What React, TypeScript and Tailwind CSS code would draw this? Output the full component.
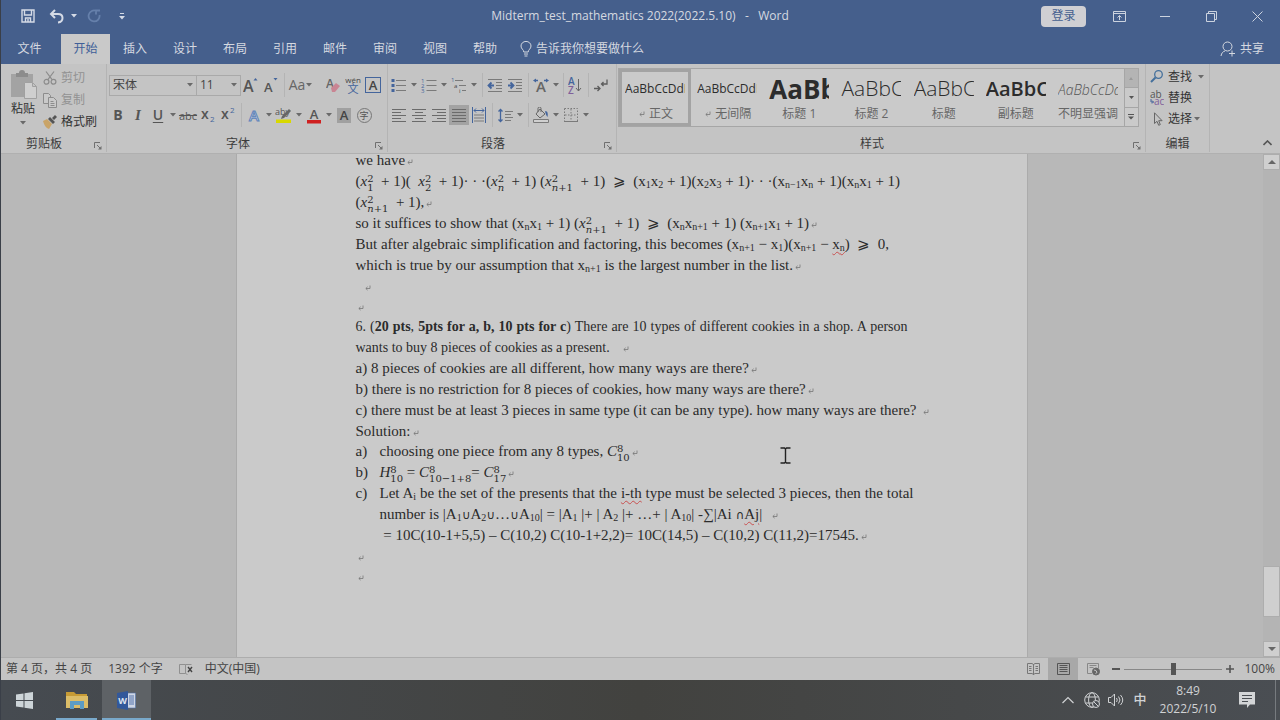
import React from "react";

type Kids = { children?: React.ReactNode };

const Caret = ({ className = "w-2.5" }: { className?: string }) => (
  <span className={`flex shrink-0 items-center justify-center ${className}`}>
    <svg width="6" height="4" viewBox="0 0 6 4"><path d="M0 0h6L3 3.4z" fill="#6a6a6a" /></svg>
  </span>
);

const Sep = ({ className = "w-1.5" }: { className?: string }) => (
  <span className={`flex h-6 shrink-0 justify-center ${className}`}><span className="w-px bg-[#b4b4b4]" /></span>
);

const Tool = ({ label, className = "w-5", children }: Kids & { label: string; className?: string }) => (
  <button type="button" aria-label={label} className={`flex h-5 shrink-0 items-center justify-center leading-none ${className}`}>
    {children}
  </button>
);

const Launcher = () => (
  <svg width="8" height="8" viewBox="0 0 8 8" fill="none" stroke="#6f6f6f"><path d="M.5 6V.5H6M3 3l3 3" /><path d="M7.5 4v3.5H4z" fill="#6f6f6f" stroke="none" /></svg>
);

const Group = ({ name, className = "", launcher = true, children }: Kids & { name: string; className?: string; launcher?: boolean }) => (
  <section aria-label={name} className={`flex shrink-0 flex-col border-r border-[#b4b4b4] ${className}`}>
    <div className="h-[72px]">{children}</div>
    <div className={`relative flex h-4 items-center justify-center text-[12px] text-[#3c3c3c] ${launcher ? "pr-[18px]" : ""}`}>
      {name}
      {launcher && <button type="button" aria-label={`${name}设置`} className="absolute right-1 bottom-0.5"><Launcher /></button>}
    </div>
  </section>
);

const Lines = ({ rows }: { rows: [number, number][] }) => (
  <svg width="14" height="15" viewBox="0 0 14 15" stroke="#6b6b6b">
    {rows.map(([a, b], i) => <path key={i} d={`M${a} ${i * 3 + 1.5}H${b}`} />)}
  </svg>
);

const styles: { name: string; sample: string; look: string; mark?: boolean; on?: boolean }[] = [
  { name: "正文", sample: "AaBbCcDdI", look: "text-[12px]", mark: true, on: true },
  { name: "无间隔", sample: "AaBbCcDdI", look: "text-[12px]", mark: true },
  { name: "标题 1", sample: "AaBb", look: "text-[26px] font-bold" },
  { name: "标题 2", sample: "AaBbC", look: "text-[21px] font-light" },
  { name: "标题", sample: "AaBbC", look: "text-[21px] font-light" },
  { name: "副标题", sample: "AaBbC", look: "text-[20px] font-semibold" },
  { name: "不明显强调", sample: "AaBbCcDd", look: "text-[14px] font-light italic text-[#555]" },
];

const Mark = ({ className = "ml-0.5" }: { className?: string }) => (
  <svg className={`inline-block ${className}`} width="6" height="6" viewBox="0 0 6 6" fill="none" stroke="#777" strokeWidth=".8"><path d="M5 .5v3H1M2.6 1.8L.8 3.5l1.8 1.6" /></svg>
);

const Sub = ({ children }: Kids) => <sub className="top-0.5 text-[10px]">{children}</sub>;

const Stack = ({ v, top, low }: { v: string; top: string; low: string }) => (
  <span className="whitespace-nowrap">
    <i>{v}</i>
    <span className="inline-flex flex-col align-middle font-['DejaVu_Serif',serif] text-[10px] leading-[9px]">
      <span>{top}</span>
      <span>{low.startsWith("n") ? <><i>n</i>{low.slice(1)}</> : low}</span>
    </span>
  </span>
);

const Op = ({ children }: Kids) => <span className="font-['DejaVu_Sans',sans-serif] text-[12px] leading-none">{children}</span>;

const Geq = () => <span className="font-['DejaVu_Sans',sans-serif] text-[15px] leading-none font-light">⩾</span>;

const Typo = ({ children }: Kids) => <span className="underline decoration-[#c8504f] decoration-wavy decoration-1 underline-offset-2">{children}</span>;

const Line = ({ children }: Kids) => <p className="h-[21px] whitespace-pre">{children}</p>;
const Blank = ({ className = "" }: { className?: string }) => <p className={`h-5 ${className}`}><Mark /></p>;

function TitleBar() {
  return (
    <div className="grid h-8 grid-cols-[1fr_auto_1fr] items-center">
      <div className="flex items-center pl-[21px]">
        <button type="button" aria-label="保存"><svg width="14" height="14" viewBox="0 0 14 14" fill="none" stroke="#d5dbe6" strokeWidth="1.4"><path d="M1 1h12v12H1z" /><path d="M3.5 1v5h7V1M4.5 13V9h5v4M7 10v3" /></svg></button>
        <button type="button" aria-label="撤消" className="ml-3.5"><svg width="16" height="15" viewBox="0 0 16 15" fill="none" stroke="#d5dbe6" strokeWidth="2"><path d="M6 1L2 5l4 4M2.5 5H9c6 0 6 8 0 8.500" /></svg></button>
        <button type="button" aria-label="撤消列表" className="ml-1.5"><svg width="6" height="4" viewBox="0 0 6 4"><path d="M0 0h6L3 3.4z" fill="#d5dbe6" /></svg></button>
        <button type="button" aria-label="重复" className="ml-2.5"><svg width="14" height="14" viewBox="0 0 14 14" fill="none" stroke="#6680ab" strokeWidth="1.8"><path d="M9.500 2A5.500 5.500 0 1 0 12.500 6M9 5.500V1.500h4" /></svg></button>
        <button type="button" aria-label="自定义快速访问工具栏" className="ml-[18px]"><svg width="6" height="7" viewBox="0 0 6 7"><path d="M1 .5h4" stroke="#d5dbe6" /><path d="M0 3h6L3 6.400z" fill="#d5dbe6" /></svg></button>
      </div>
      <h1 className="whitespace-pre text-[12px] text-[#d5d9e0]">Midterm_test_mathematics 2022(2022.5.10)   -   Word</h1>
      <div className="flex items-center justify-end">
        <button type="button" className="mr-2.5 h-[21px] w-[45px] rounded-sm bg-[#cfcfd3] text-[12px] leading-none text-[#45608f]">登录</button>
        <button type="button" aria-label="功能区显示选项" className="flex w-[46px] justify-center"><svg width="13" height="11" viewBox="0 0 13 11" fill="none" stroke="#ccd3df"><path d="M.5.5h12v10H.5zM.5 2.500h12M6.500 9V4.500M4.500 6.500l2-2 2 2" /></svg></button>
        <button type="button" aria-label="最小化" className="flex w-[46px] justify-center"><svg width="10" height="10" viewBox="0 0 10 10" stroke="#ccd3df"><path d="M0 5.500h10" /></svg></button>
        <button type="button" aria-label="还原" className="flex w-[46px] justify-center"><svg width="11" height="11" viewBox="0 0 11 11" fill="none" stroke="#ccd3df"><path d="M.5 2.500h8v8h-8zM2.500 2.500v-2h8v8h-2" /></svg></button>
        <button type="button" aria-label="关闭" className="flex w-[46px] justify-center"><svg width="11" height="11" viewBox="0 0 11 11" stroke="#ccd3df"><path d="M.5.5l10 10M10.500.5l-10 10" /></svg></button>
      </div>
    </div>
  );
}

function Tabs() {
  return (
    <nav className="flex h-8 items-end pl-1 text-[12px] text-[#d5d9e0]">
      <button type="button" className="mr-1.5 h-[30px] w-[51px]">文件</button>
      <button type="button" aria-current="page" className="h-[30px] w-[49px] bg-[#c9c9c9] text-[#3f5f98]">开始</button>
      {["插入", "设计", "布局", "引用", "邮件", "审阅", "视图", "帮助"].map((t) => (
        <button key={t} type="button" className="h-[30px] w-[50px]">{t}</button>
      ))}
      <button type="button" className="ml-2.5 flex h-[30px] items-center gap-1">
        <svg width="12" height="16" viewBox="0 0 12 16" fill="none" stroke="#d5d9e0"><path d="M3.800 11C3.800 8.600 1 8 1 5a5 4.600 0 0 1 10 0c0 3-2.800 3.600-2.800 6zM4 13h4M4.500 15h3" /></svg>
        告诉我你想要做什么
      </button>
      <button type="button" className="mr-4 ml-auto flex h-[30px] items-center gap-1">
        <svg width="16" height="16" viewBox="0 0 16 16" fill="none" stroke="#d5d9e0"><circle cx="7.500" cy="5.500" r="4.500" /><path d="M1 15c.5-3 2-4.500 4-5M12 9.500v6M9 12.500h6" /></svg>
        共享
      </button>
    </nav>
  );
}

function Clipboard() {
  return (
    <Group name="剪贴板" className="w-[107px]">
      <div className="flex gap-1.5 pl-[9px]">
        <button type="button" className="flex w-7 flex-col items-center pt-1.5 text-[12px] leading-4 text-[#333]">
          <svg width="28" height="31" viewBox="0 0 28 31"><path d="M2 4h22v8h-8v15H2z" fill="#a3a3a3" /><path d="M7 3h3a3 3 0 0 1 6 0h3v4H7z" fill="#8c8c8c" /><path d="M15.500 12.500h8l4 4v12h-12zM23.500 12.500v4h4" fill="#cfcfcf" stroke="#a0a0a0" /></svg>
          <span className="whitespace-nowrap">粘贴</span>
          <Caret className="h-3" />
        </button>
        <div className="flex flex-col pt-[3px] text-[12px] text-[#929292]">
          <button type="button" className="flex h-[22px] items-center gap-1">
            <svg width="14" height="14" viewBox="0 0 14 14" fill="none" stroke="#8c8c8c" strokeWidth="1.2"><circle cx="3.500" cy="10.800" r="2.400" /><circle cx="10.500" cy="10.800" r="2.400" /><path d="M3 .5l6.300 8.300M11 .5L4.700 8.800" /></svg>剪切
          </button>
          <button type="button" className="flex h-[22px] items-center gap-1">
            <svg width="14" height="15" viewBox="0 0 14 15" fill="#c9c9c9" stroke="#8c8c8c"><path d="M.5.5h5l2 2v8h-7z" /><path d="M5.500 4.500h5l3 3v7h-8zM7.500 8.500h3M7.500 10.500h4M7.500 12.500h4" /></svg>复制
          </button>
          <button type="button" className="flex h-[22px] items-center gap-1 text-[#333]">
            <svg width="14" height="14" viewBox="0 0 14 14"><path d="M0 6l4-2 5 5-3 5c-3-1-5-4-6-8z" fill="#c9a468" /><path d="M5 4l2-2 5 5-2 2zM9 3l3-3 2 2-3 3z" fill="#555" /></svg>格式刷
          </button>
        </div>
      </div>
    </Group>
  );
}

function FontGroup() {
  return (
    <Group name="字体" className="w-[281px]">
      <div className="flex h-[30px] items-center pt-3 pl-0.5">
        <label className="relative flex">
          <select aria-label="字体" className="h-[21px] w-[88px] appearance-none border border-[#a9a9a9] pl-[3px] text-[12px] leading-none text-[#444]"><option>宋体</option></select>
          <span className="pointer-events-none absolute top-2 right-0.5"><Caret /></span>
        </label>
        <label className="relative -ml-px flex">
          <select aria-label="字号" className="h-[21px] w-[45px] appearance-none border border-[#a9a9a9] pl-[3px] text-[12px] leading-none text-[#444]"><option>11</option></select>
          <span className="pointer-events-none absolute top-2 right-0.5"><Caret /></span>
        </label>
        <Tool label="增大字号"><svg width="16" height="16" viewBox="0 0 16 16"><text x="0" y="15" fontSize="16" fontWeight="600" fill="#555">A</text><path d="M10.500 3.500L12.500 1l2 2.500z" fill="#44659c" /></svg></Tool>
        <Tool label="减小字号"><svg width="16" height="16" viewBox="0 0 16 16"><text x="1" y="15" fontSize="13" fontWeight="600" fill="#555">A</text><path d="M10.500 1h4l-2 2.500z" fill="#44659c" /></svg></Tool>
        <Sep />
        <Tool label="更改大小写" className="mr-2 w-7"><span className="text-[14px] text-[#666]">Aa</span><Caret className="w-2" /></Tool>
        <Tool label="清除格式"><svg width="15" height="15" viewBox="0 0 15 15"><text x="0" y="10" fontSize="12" fontWeight="600" fill="#666">A</text><path d="M5 10l5-5 4 3-5 6H6z" fill="#c98593" /></svg></Tool>
        <Tool label="拼音指南"><svg width="16" height="18" viewBox="0 0 16 18"><text x="8" y="6.500" fontSize="8" textAnchor="middle" fill="#444">wén</text><text x="8" y="16.500" fontSize="11" textAnchor="middle" fill="#44659c">文</text></svg></Tool>
        <Tool label="字符边框"><span className="flex size-4 items-center justify-center border border-[#44659c] text-[13px] leading-none font-semibold text-[#444]">A</span></Tool>
      </div>
      <div className="flex h-[42px] items-center pl-px text-[14px] text-[#555]">
        <Tool label="加粗"><b>B</b></Tool>
        <Tool label="倾斜"><i className="font-['Liberation_Serif',serif] text-[15px] font-bold">I</i></Tool>
        <Tool label="下划线"><span className="font-semibold underline underline-offset-2">U</span></Tool>
        <Caret />
        <Tool label="删除线"><s className="text-[11px]">abc</s></Tool>
        <Tool label="下标"><svg width="14" height="16" viewBox="0 0 14 16"><text x="0" y="12" fontSize="14" fontWeight="600" fill="#555">x</text><text x="9" y="15" fontSize="8" fill="#44659c">2</text></svg></Tool>
        <Tool label="上标"><svg width="14" height="16" viewBox="0 0 14 16"><text x="0" y="12" fontSize="14" fontWeight="600" fill="#555">x</text><text x="9" y="6" fontSize="8" fill="#44659c">2</text></svg></Tool>
        <Sep />
        <Tool label="文本效果"><svg width="14" height="15" viewBox="0 0 14 15"><text x="7" y="13" fontSize="15" fontWeight="600" textAnchor="middle" fill="#c9d3e0" stroke="#5d83ba">A</text></svg></Tool>
        <Caret />
        <Tool label="突出显示"><svg width="18" height="17" viewBox="0 0 18 17"><text x="0" y="8" fontSize="9" fill="#555">aby</text><path d="M6 12l1-3 7-7 2 2-7 7z" fill="#666" /><rect x="1" y="12.500" width="15" height="3.500" fill="#d8d800" /></svg></Tool>
        <Caret />
        <Tool label="字体颜色"><svg width="16" height="17" viewBox="0 0 16 17"><text x="8" y="11.500" fontSize="13" fontWeight="600" textAnchor="middle" fill="#555">A</text><rect x="1" y="13" width="14" height="3.500" fill="#cf2020" /></svg></Tool>
        <Caret />
        <Tool label="字符底纹"><span className="flex h-[15px] w-3.5 items-center justify-center bg-[#a0a0a0] text-[13px] leading-none font-semibold text-[#444]">A</span></Tool>
        <Tool label="带圈字符"><span className="flex size-[15px] items-center justify-center rounded-full border border-[#777] text-[9px] leading-none">字</span></Tool>
      </div>
    </Group>
  );
}

function ParagraphGroup() {
  return (
    <Group name="段落" className="w-[229px]">
      <div className="flex h-[30px] items-center pt-3 pl-px">
        <Tool label="项目符号"><svg width="16" height="15" viewBox="0 0 16 15"><path d="M5 2.500h10M5 7.500h10M5 12.500h10" stroke="#7a7a7a" /><path d="M.5 1h3v3h-3zM.5 6h3v3h-3zM.5 11h3v3h-3z" fill="#44659c" /></svg></Tool><Caret />
        <Tool label="编号"><svg width="16" height="15" viewBox="0 0 16 15"><path d="M5.500 2.500h10M5.500 7.500h10M5.500 12.500h10" stroke="#7a7a7a" /><g fontSize="6" fill="#44659c"><text x="0" y="4.500">1</text><text x="0" y="9.800">2</text><text x="0" y="15">3</text></g></svg></Tool><Caret />
        <Tool label="多级列表"><svg width="16" height="15" viewBox="0 0 16 15"><path d="M4 2.500h8M8 7.500h7M11 12.500h4" stroke="#7a7a7a" /><g fontSize="6" fill="#444"><text x="0" y="4" fill="#44659c">1</text><text x="3" y="10">a</text><text x="8" y="14.500">i</text></g></svg></Tool><Caret />
        <Sep />
        <Tool label="减少缩进量"><svg width="16" height="13" viewBox="0 0 16 13"><path d="M1 .5h14M9 3.500h6M9 6.500h6M9 9.500h6M1 12.500h14" stroke="#7a7a7a" /><path d="M7 6.500H2M4.500 3.500l-3 3 3 3" fill="none" stroke="#44659c" strokeWidth="1.800" /></svg></Tool>
        <Tool label="增加缩进量"><svg width="16" height="13" viewBox="0 0 16 13"><path d="M1 .5h14M9 3.500h6M9 6.500h6M9 9.500h6M1 12.500h14" stroke="#7a7a7a" /><path d="M1 6.500h5M3.500 3.500l3 3-3 3" fill="none" stroke="#44659c" strokeWidth="1.800" /></svg></Tool>
        <Sep />
        <Tool label="中文版式"><svg width="16" height="15" viewBox="0 0 16 15"><text x="8" y="14" fontSize="15" fontWeight="600" textAnchor="middle" fill="#666">A</text><path d="M0 2.500L3 .5v1.300h2v1.400H3v1.300zM16 2.500L13 .5v1.300h-2v1.400h2v1.300z" fill="#44659c" /></svg></Tool><Caret />
        <Sep className="w-1" />
        <Tool label="排序"><svg width="14" height="17" viewBox="0 0 14 17"><g fontSize="10" fontWeight="600"><text x="0" y="8" fill="#44659c">A</text><text x="0" y="16.500" fill="#80609a">Z</text></g><path d="M10.500 2v12M8 11l2.500 3L13 11" fill="none" stroke="#666" /></svg></Tool>
        <Sep />
        <Tool label="显示编辑标记"><svg width="14" height="13" viewBox="0 0 14 13" fill="none" stroke="#5c5c5c" strokeWidth="1.300"><path d="M13 .5V5H7.500M9.500 3L7.500 5l2 2M0 9.500h5.500M3.500 7l2.500 2.500L3.500 12" /></svg></Tool>
      </div>
      <div className="flex h-[42px] items-center pl-px">
        <Tool label="左对齐"><Lines rows={[[0, 14], [0, 9], [0, 14], [0, 9], [0, 14]]} /></Tool>
        <Tool label="居中"><Lines rows={[[0, 14], [3, 11], [0, 14], [3, 11], [0, 14]]} /></Tool>
        <Tool label="右对齐"><Lines rows={[[0, 14], [5, 14], [0, 14], [5, 14], [0, 14]]} /></Tool>
        <Tool label="两端对齐" className="w-5 bg-[#a3a3a3]"><Lines rows={[[0, 14], [0, 14], [0, 14], [0, 14], [0, 14]]} /></Tool>
        <Tool label="分散对齐"><svg width="16" height="16" viewBox="0 0 16 16" fill="none"><path d="M1.500 0v16M14.500 0v16M3 3.500h10M5 1.500l-2 2 2 2M11 1.500l2 2-2 2" stroke="#44659c" /><path d="M3 8h10M3 11h10M3 14h10" stroke="#7a7a7a" /></svg></Tool>
        <Sep />
        <Tool label="行距"><svg width="15" height="15" viewBox="0 0 15 15" fill="none"><path d="M2.500 1v13M.5 3.500l2-2 2 2M.5 11.500l2 2 2-2" stroke="#44659c" strokeWidth="1.300" /><path d="M7 3.500h8M7 6.500h6M7 9.500h8M7 12.500h6" stroke="#7a7a7a" /></svg></Tool><Caret />
        <Sep />
        <Tool label="底纹"><svg width="17" height="16" viewBox="0 0 17 16" fill="none"><path d="M7 2l5 5-5 4-4-4zM5 5V1.500a1.500 1.500 0 0 1 3 0V5" stroke="#666" /><path d="M12 4c3 0 3 3 2.500 6-1-1-2-3-2.500-6z" fill="#44659c" /><path d="M.5 12.500h15v3H.5z" stroke="#7a7a7a" fill="#d0d0d0" /></svg></Tool><Caret />
        <Tool label="边框"><svg width="14" height="14" viewBox="0 0 14 14" fill="none" stroke="#7a7a7a"><path d="M.5.5h13v13M.5.5v13M7 1v12M1 7h12" strokeDasharray="1.500 1.500" /><path d="M0 13.500h14" /></svg></Tool><Caret />
      </div>
    </Group>
  );
}

function StylesGroup() {
  return (
    <Group name="样式" className="w-[529px]">
      <div className="pt-1 pr-1.5 pl-px">
        <div className="flex h-[59px] border border-[#a6a6a6] bg-[#cacaca]">
          {styles.map((s) => (
            <button key={s.name} type="button" className={`flex min-w-0 flex-1 flex-col items-center ${s.on ? "border-[3px] border-[#a3a3a3]" : "border-[3px] border-transparent"}`}>
              <span className="flex h-[34px] w-[60px] items-center overflow-hidden">
                <span className={`whitespace-nowrap text-[#2c2c2c] ${s.look}`}>{s.sample}</span>
              </span>
              <span className="flex items-center gap-1 text-[12px] leading-4 whitespace-nowrap text-[#666]">{s.mark && <Mark />}{s.name}</span>
            </button>
          ))}
          <div className="flex w-3.5 flex-col border-l border-[#a6a6a6]">
            <button type="button" aria-label="上一行" className="flex flex-1 items-center justify-center bg-[#b4b4b4]"><svg width="4" height="3" viewBox="0 0 4 3"><path d="M0 3h4L2 0z" fill="#999" /></svg></button>
            <button type="button" aria-label="下一行" className="flex flex-1 items-center justify-center border-y border-[#a6a6a6]"><svg width="5" height="3" viewBox="0 0 5 3"><path d="M0 0h5L2.500 3z" fill="#555" /></svg></button>
            <button type="button" aria-label="其他" className="flex flex-1 items-center justify-center"><svg width="6" height="6" viewBox="0 0 6 6"><path d="M0 .5h6" stroke="#555" /><path d="M0 2.500h6L3 5.500z" fill="#555" /></svg></button>
          </div>
        </div>
      </div>
    </Group>
  );
}

function EditGroup() {
  return (
    <Group name="编辑" launcher={false} className="w-[64px]">
      <div className="flex flex-col pt-0.5 pl-1 text-[12px] text-[#333]">
        <button type="button" className="flex h-[21px] items-center gap-1 whitespace-nowrap">
          <svg width="14" height="13" viewBox="0 0 14 13" fill="none"><circle cx="8.500" cy="4.500" r="3.800" stroke="#44709c" strokeWidth="1.300" /><path d="M5.500 7.500L1 12" stroke="#44709c" strokeWidth="2" /></svg>查找<Caret />
        </button>
        <button type="button" className="flex h-[21px] items-center gap-1 whitespace-nowrap">
          <svg width="14" height="16" viewBox="0 0 14 16" fontSize="10"><text x="0" y="7.500" fill="#555">ab</text><text x="4" y="15" fill="#80609a">ac</text><path d="M1 9v3h2.500M2 10.500L3.500 12 2 13.500" fill="none" stroke="#44659c" /></svg>替换
        </button>
        <button type="button" className="flex h-[21px] items-center gap-1 whitespace-nowrap">
          <svg width="14" height="14" viewBox="0 0 14 14" fill="none" stroke="#666"><path d="M4.500.8v10.700l2.500-2.200 1.700 4 1.600-.7-1.600-3.900h3.400z" /></svg>选择<Caret className="-ml-1 w-2.5" />
        </button>
      </div>
    </Group>
  );
}

function Page() {
  return (
    <article className="relative w-[792px] shrink-0 border-x border-[#ababab] bg-[#cacaca] pr-[113px] pl-[119px] font-['Liberation_Serif','Noto_Sans_CJK_SC',serif] text-[15px] leading-[21px] text-[#2b2b2b]">
      <div className="-mt-1">
        <Line>we have<Mark /></Line>
        <Line>(<Stack v="x" top="2" low="1" />  + 1)(  <Stack v="x" top="2" low="2" />  + 1)· · ·(<Stack v="x" top="2" low="n" />  + 1) (<Stack v="x" top="2" low="n+1" />  + 1)  <Geq />  (x<Sub>1</Sub>x<Sub>2</Sub> + 1)(x<Sub>2</Sub>x<Sub>3</Sub> + 1)· · ·(x<Sub>n−1</Sub>x<Sub>n</Sub> + 1)(x<Sub>n</Sub>x<Sub>1</Sub> + 1)</Line>
        <Line>(<Stack v="x" top="2" low="n+1" />  + 1),<Mark /></Line>
        <Line>so it suffices to show that (x<Sub>n</Sub>x<Sub>1</Sub> + 1) (<Stack v="x" top="2" low="n+1" />  + 1)  <Geq />  (x<Sub>n</Sub>x<Sub>n+1</Sub> + 1) (x<Sub>n+1</Sub>x<Sub>1</Sub> + 1)<Mark /></Line>
        <Line>But after algebraic simplification and factoring, this becomes (x<Sub>n+1</Sub> − x<Sub>1</Sub>)(x<Sub>n+1</Sub> − <Typo>x<Sub>n</Sub></Typo>)  <Geq />  0,</Line>
        <Line>which is true by our assumption that x<Sub>n+1</Sub> is the largest number in the list.<Mark /></Line>
        <Blank className="pl-[7px]" />
        <Blank />
        <p className="mr-1.5 text-justify text-[14px] leading-[21px]">6. (<b>20 pts</b>, <b>5pts for a, b, 10 pts for c</b>) There are 10 types of different cookies in a shop. A person wants to buy 8 pieces of cookies as a present. <Mark className="ml-2.5" /></p>
        <Line>a) 8 pieces of cookies are all different, how many ways are there?<Mark /></Line>
        <Line>b) there is no restriction for 8 pieces of cookies, how many ways are there?<Mark /></Line>
        <Line>c) there must be at least 3 pieces in same type (it can be any type). how many ways are there?<Mark className="ml-1.5" /></Line>
        <p className="h-5">Solution:<Mark /></p>
        <div className="grid grid-cols-[24px_1fr]">
          <span>a)</span><Line>choosing one piece from any 8 types, <Stack v="C" top="8" low="10" /><Mark /></Line>
          <span>b)</span><Line><Stack v="H" top="8" low="10" /> = <Stack v="C" top="8" low="10−1+8" />= <Stack v="C" top="8" low="17" /><Mark /></Line>
          <span>c)</span>
          <div>
            <p className="text-justify">Let A<Sub>i</Sub> be the set of the presents that the <Typo>i-th</Typo> type must be selected 3 pieces, then the total number is |A<Sub>1</Sub><Op>∪</Op>A<Sub>2</Sub><Op>∪</Op>…<Op>∪</Op>A<Sub>10</Sub>| = |A<Sub>1</Sub> |+ | A<Sub>2</Sub> |+ …+ | A<Sub>10</Sub>| -∑|Ai <Op>∩</Op><Typo>Aj</Typo>| <Mark className="ml-1.5" /></p>
            <Line> = 10C(10-1+5,5) – C(10,2) C(10-1+2,2)= 10C(14,5) – C(10,2) C(11,2)=17545.<Mark /></Line>
          </div>
        </div>
        <Blank />
        <Blank />
      </div>
      <svg className="absolute top-[293px] left-[543px]" width="11" height="17" viewBox="0 0 11 17" fill="none" stroke="#222" strokeWidth="1.400"><path d="M.5 1h4l1 1 1-1h4M.5 16h4l1-1 1 1h4M5.500 2v13" /></svg>
    </article>
  );
}

function ScrollBar() {
  return (
    <div className="flex w-[17px] shrink-0 flex-col bg-[#b4b4b4]">
      <button type="button" aria-label="向上滚动" className="flex h-4 items-center justify-center border border-[#adadad] bg-[#cfcfcf]"><svg width="8" height="4" viewBox="0 0 8 4"><path d="M0 4h8L4 0z" fill="#666" /></svg></button>
      <div className="flex-[398]" />
      <div className="flex-[49] border border-[#adadad] bg-[#cfcfcf]" />
      <div className="flex-[24]" />
      <button type="button" aria-label="向下滚动" className="flex h-4 items-center justify-center border border-[#adadad] bg-[#cfcfcf]"><svg width="8" height="4" viewBox="0 0 8 4"><path d="M0 0h8L4 4z" fill="#666" /></svg></button>
    </div>
  );
}

function StatusBar() {
  return (
    <footer className="flex h-[23px] shrink-0 items-center border-t border-[#adadad] bg-[#c4c4c4] pl-1.5 text-[12px] text-[#444]">
      <span>第 4 页，共 4 页</span>
      <span className="ml-4">1392 个字</span>
      <svg className="ml-4" width="14" height="12" viewBox="0 0 14 12" fill="none" stroke="#909090"><path d="M6.500 1.500H.5v9h6zM6.500 1.500h6M6.500 10.500l2 1" /><path d="M9 4l4 5M13 4L9 9" stroke="#444" strokeWidth="1.400" /></svg>
      <span className="ml-3">中文(中国)</span>
      <div className="ml-auto flex h-full items-center">
        <button type="button" aria-label="阅读视图" className="flex h-full w-[30px] items-center justify-center"><svg width="13" height="12" viewBox="0 0 13 12" fill="none" stroke="#777"><path d="M.5.5h4.500l1.500 1 1.500-1h4.500v10H8l-1.500 1-1.500-1H.5zM6.500 1v11M2 3.500h2.500M2 5.500h2.500M2 7.500h2.500M8.500 3.500H11M8.500 5.500H11M8.500 7.500H11" /></svg></button>
        <button type="button" aria-label="页面视图" className="flex h-full w-[30px] items-center justify-center bg-[#a8a8a8]"><svg width="13" height="12" viewBox="0 0 13 12" fill="none" stroke="#555"><path d="M.5.5h12v11H.5zM2.500 2.500h8M2.500 4.500h8M2.500 6.500h8M2.500 8.500h8" /></svg></button>
        <button type="button" aria-label="Web 版式视图" className="flex h-full w-[30px] items-center justify-center"><svg width="13" height="13" viewBox="0 0 13 13" fill="none" stroke="#888"><path d="M5 10.500H.5V.5h11V5M2.500 2.500h7M2.500 4.500h4" /><circle cx="9" cy="8.500" r="3.500" fill="#666" stroke="#666" /><path d="M7 7l2 .5 1 2-1.500 1" stroke="#c4c4c4" /></svg></button>
        <button type="button" aria-label="缩小" className="flex w-4 items-center justify-center"><svg width="8" height="8" viewBox="0 0 8 8" stroke="#555" strokeWidth="2"><path d="M0 4h8" /></svg></button>
        <input type="range" aria-label="显示比例" min="10" max="190" defaultValue="100" className="h-3 w-[98px] appearance-none bg-transparent [&::-webkit-slider-runnable-track]:h-px [&::-webkit-slider-runnable-track]:bg-[#888] [&::-webkit-slider-thumb]:-mt-1.5 [&::-webkit-slider-thumb]:h-3 [&::-webkit-slider-thumb]:w-[5px] [&::-webkit-slider-thumb]:appearance-none [&::-webkit-slider-thumb]:bg-[#555]" />
        <button type="button" aria-label="放大" className="flex w-4 items-center justify-center"><svg width="8" height="8" viewBox="0 0 8 8" stroke="#555" strokeWidth="1.600"><path d="M0 4h8M4 0v8" /></svg></button>
        <span className="w-[42px] pr-[5px] text-right">100%</span>
      </div>
    </footer>
  );
}

function TaskBar() {
  return (
    <div className="flex h-10 shrink-0 items-stretch bg-linear-to-r from-[#464b51] via-[#42423f] to-[#4a4e53] text-[#d0d2d4]">
      <button type="button" aria-label="开始菜单" className="flex w-[49px] items-center justify-center"><svg width="17" height="17" viewBox="0 0 17 17" fill="#cdd4d8"><path d="M0 2.500l7.500-1V8H0zM8.500 1.300L17 0v8H8.500zM0 9h7.500v6.500L0 14.500zM8.500 9H17v8l-8.500-1.300z" /></svg></button>
      <button type="button" aria-label="文件资源管理器" className="ml-[7px] flex w-[41px] items-center justify-center border-y-2 border-t-transparent border-b-[#79a9cb]"><svg width="22" height="18" viewBox="0 0 22 18"><path d="M0 1h8l2 2h11v13H0z" fill="#c79b35" /><path d="M0 5h22v12H0z" fill="#dcbd68" /><path d="M4 10h14v8h-4v-4H8v4H4z" fill="#5c9cc4" /></svg></button>
      <button type="button" aria-label="Word" className="ml-[5px] flex w-[49px] items-center justify-center border-y-2 border-t-[#5e6266] border-b-[#79a9cb] bg-[#5e6266]"><svg width="19" height="19" viewBox="0 0 19 19"><path d="M10 2h8.500v15H10z" fill="#cfd6e4" stroke="#5273ab" strokeWidth=".6" /><path d="M12 5h5M12 7h5M12 9h5M12 11h5M12 13h5" stroke="#5273ab" /><path d="M0 2l11-2v19L0 17z" fill="#33589a" /><text x="5.500" y="13" fontSize="9" fontWeight="700" textAnchor="middle" fill="#dde3ee">W</text></svg></button>
      <div className="ml-auto flex items-center">
        <button type="button" aria-label="显示隐藏的图标" className="flex w-6 justify-center"><svg width="12" height="8" viewBox="0 0 12 8" fill="none" stroke="#d0d2d4" strokeWidth="1.200"><path d="M.5 7L6 1.500 11.500 7" /></svg></button>
        <button type="button" aria-label="网络" className="flex w-6 justify-center"><svg width="16" height="16" viewBox="0 0 16 16" fill="none" stroke="#d0d2d4"><circle cx="8" cy="8" r="7.300" /><ellipse cx="8" cy="8" rx="3.400" ry="7.300" /><path d="M1.500 5h13M1.500 11h13" /><circle cx="12" cy="12" r="3.500" fill="#4a4e53" /><path d="M9.800 9.800l4.400 4.400" /></svg></button>
        <button type="button" aria-label="音量" className="flex w-6 justify-center"><svg width="16" height="14" viewBox="0 0 16 14" fill="none" stroke="#d0d2d4"><path d="M.5 4.500h2.500l3.500-3.500v12L3 9.500H.5zM8.500 5q1.500 2 0 4M10.500 3.500q3 3.500 0 7M12.500 2q4.500 5 0 10" /></svg></button>
        <button type="button" className="w-6 text-center text-[13px] font-medium">中</button>
        <button type="button" className="w-[72px] text-center text-[12px] leading-[18px]">8:49<br />2022/5/10</button>
        <button type="button" aria-label="通知" className="flex w-[46px] justify-center"><svg width="16" height="16" viewBox="0 0 16 16"><path d="M0 0h16v12.500H11L8 16v-3.500H0z" fill="#d3d5d7" /><path d="M3 3.500h10M3 6.500h10M3 9.500h6" stroke="#4a4e53" /></svg></button>
        <span className="mr-1 ml-[5px] h-10 w-px bg-[#777b7f]" />
      </div>
    </div>
  );
}

export default function App() {
  return (
    <div className="relative flex h-screen w-full flex-col overflow-hidden bg-[#b8b8b8] font-['Open_Sans','Noto_Sans_CJK_SC',sans-serif]">
      <header className="shrink-0 bg-[#455f8c]"><TitleBar /><Tabs /></header>
      <div className="flex h-[90px] shrink-0 border-b border-[#b0b0b0] bg-[#c4c4c4] pb-px">
        <Clipboard /><FontGroup /><ParagraphGroup /><StylesGroup /><EditGroup />
        <button type="button" aria-label="折叠功能区" className="mt-auto mr-2 mb-1.5 ml-auto"><svg width="9" height="6" viewBox="0 0 9 6" fill="none" stroke="#555" strokeWidth="1.600"><path d="M.5 5l4-4 4 4" /></svg></button>
      </div>
      <main className="flex min-h-0 flex-1">
        <div className="flex min-w-0 flex-1 justify-center overflow-hidden"><Page /></div>
        <ScrollBar />
      </main>
      <StatusBar />
      <TaskBar />
      <div className="pointer-events-none absolute inset-y-0 left-0 w-px bg-[#3a3f48]" />
    </div>
  );
}
